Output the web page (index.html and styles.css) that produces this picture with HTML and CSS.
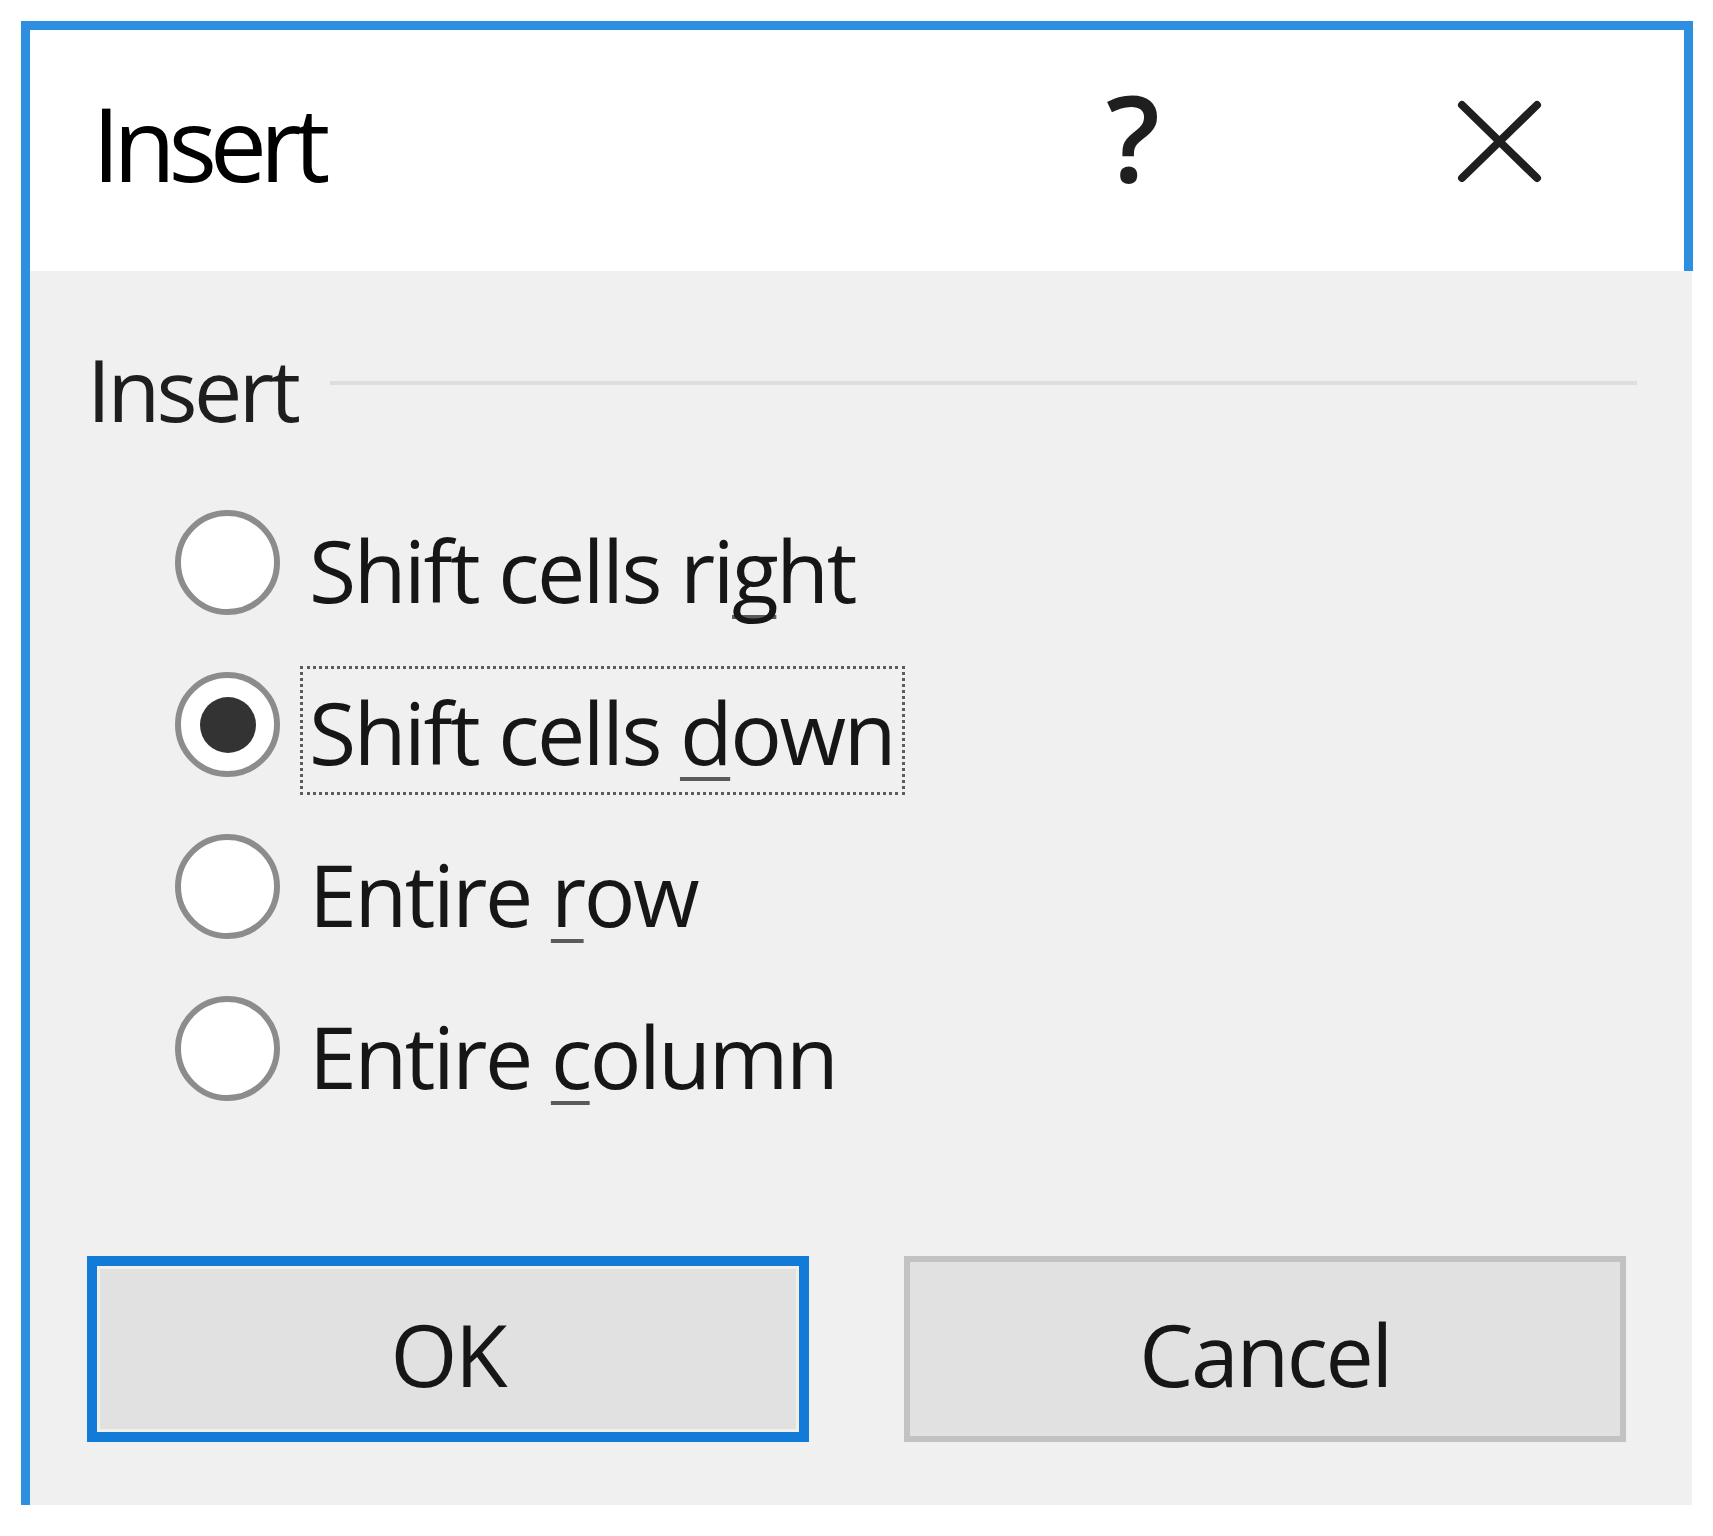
FILE: index.html
```html
<!DOCTYPE html>
<html lang="en">
<head>
<meta charset="utf-8">
<title>Insert</title>
<link rel="stylesheet" href="styles.css">
</head>
<body>
<div class="dialog">
  <div class="titlebar">
    <span class="title">Insert</span>
    <span class="help">?</span>
    <svg class="close" width="85" height="83" viewBox="0 0 85 83">
      <path d="M5 5 L80 78 M80 5 L5 78" stroke="#1f1f1f" stroke-width="8" stroke-linecap="round" fill="none"/>
    </svg>
  </div>
  <div class="content">
    <div class="group-head">
      <span class="group-label">Insert</span>
      <span class="rule"></span>
    </div>
    <div class="options">
      <div class="option">
        <span class="radio"></span>
        <span class="label">Shift cells ri<u>g</u>ht</span>
      </div>
      <div class="option">
        <span class="radio checked"><span class="dot"></span></span>
        <span class="label focused">Shift cells <u>d</u>own</span>
      </div>
      <div class="option">
        <span class="radio"></span>
        <span class="label">Entire <u>r</u>ow</span>
      </div>
      <div class="option">
        <span class="radio"></span>
        <span class="label">Entire <u>c</u>olumn</span>
      </div>
    </div>
    <div class="buttons">
      <button class="btn btn-default" type="button">OK</button>
      <button class="btn" type="button">Cancel</button>
    </div>
  </div>
</div>
</body>
</html>
```

FILE: styles.css
```css
html, body {
  margin: 0;
  padding: 0;
  background: #ffffff;
}

body {
  font-family: "Open Sans", "Noto Sans", sans-serif;
  color: #161616;
}

.dialog {
  margin: 21px 0 0 21px;
  width: 1672px;
}

.titlebar {
  box-sizing: border-box;
  height: 250px;
  display: flex;
  align-items: flex-start;
  background: #ffffff;
  border-top: 9px solid #2e8ee0;
  border-left: 9px solid #2e8ee0;
  border-right: 9px solid #2e8ee0;
  padding-left: 62px;
}

.title {
  margin-top: 62px;
  font-size: 102px;
  line-height: 102px;
  letter-spacing: -7.3px;
  color: #000000;
}

.help {
  margin-left: auto;
  margin-top: 47px;
  width: 60px;
  font-size: 119px;
  line-height: 119px;
  font-weight: 600;
  color: #1f1f1f;
}

.close {
  display: block;
  margin-top: 70px;
  margin-left: 291px;
  margin-right: 142px;
}

.content {
  box-sizing: border-box;
  width: 1671px;
  height: 1234px;
  background: #f0f0f0;
  border-left: 9px solid #2e8ee0;
  padding: 68px 0 0 57px;
}

.group-head {
  display: flex;
  align-items: flex-start;
  height: 100px;
}

.group-label {
  font-size: 86px;
  line-height: 100px;
  letter-spacing: -3.6px;
  color: #1e1e1e;
}

.rule {
  flex: 1;
  height: 4px;
  margin: 42px 55px 0 33px;
  background: #dedede;
}

.options {
  margin-top: 65px;
  margin-left: 88px;
  display: flex;
  flex-direction: column;
  gap: 33px;
}

.option {
  display: flex;
  align-items: flex-start;
  gap: 20px;
}

.radio {
  box-sizing: border-box;
  width: 105px;
  height: 105px;
  margin-top: 6px;
  border: 6px solid #8c8c8c;
  border-radius: 50%;
  background: #ffffff;
  display: flex;
  align-items: center;
  justify-content: center;
}

.dot {
  width: 56px;
  height: 56px;
  border-radius: 50%;
  background: #333333;
}

.label {
  border: 3px solid transparent;
  padding: 13px 8px 10px 6px;
  font-size: 86px;
  line-height: 100px;
  letter-spacing: -2.4px;
  color: #161616;
}

.label u {
  text-decoration: underline;
  text-decoration-thickness: 4px;
  text-underline-offset: 12px;
  text-decoration-skip-ink: none;
  text-decoration-color: #5a5a5a;
}

.label.focused {
  border: 3px dotted #5c5c5c;
}

.buttons {
  margin-top: 137px;
  display: flex;
  gap: 95px;
}

.btn {
  box-sizing: border-box;
  width: 722px;
  height: 186px;
  padding: 10px 0 0 0;
  background: #e1e1e1;
  border: 6px solid #c2c2c2;
  font-family: "Open Sans", "Noto Sans", sans-serif;
  font-size: 86px;
  line-height: 100px;
  letter-spacing: -2.4px;
  color: #161616;
  display: flex;
  align-items: center;
  justify-content: center;
}

.btn-default {
  border: 10px solid #127bd8;
  box-shadow: inset 0 0 0 3px #f4eee8;
}
```
